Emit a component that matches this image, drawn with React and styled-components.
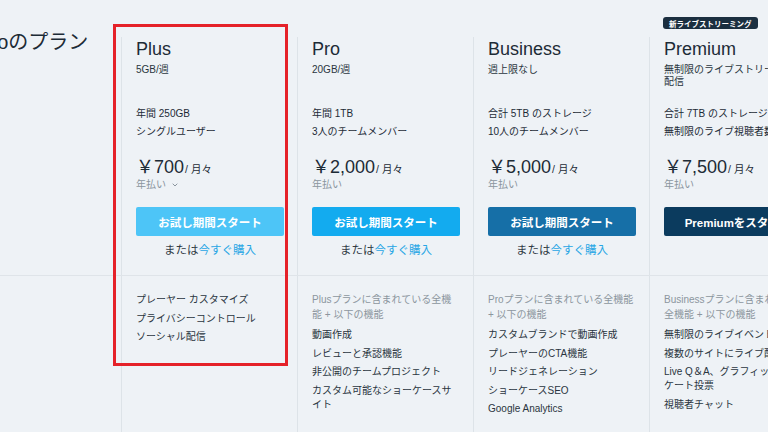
import React from "react";
import styled, { createGlobalStyle } from "styled-components";

const GlobalStyle = createGlobalStyle`
  html, body { margin: 0; padding: 0; background: #eef2f6; overflow: hidden; }
  body {
    font-family: "Liberation Sans", "Noto Sans CJK JP", sans-serif;
    color: #1d2b36;
    width: 768px;
    height: 432px;
  }
  * { box-sizing: border-box; }
`;

const Page = styled.div`
  position: relative;
  width: 768px;
  height: 432px;
  overflow: hidden;
  background: #eef2f6;
`;

const TopRow = styled.div`
  display: flex;
  height: 276px;
  border-bottom: 1px solid #dfe4e9;
`;

const BottomRow = styled.div`
  display: flex;
  height: 156px;
`;

const LeftCell = styled.div`
  width: 121px;
  flex-shrink: 0;
  padding-top: ${(p) => (p.$top ? "30px" : "0")};
`;

const PageTitle = styled.h1`
  margin: 0 0 0 -48px;
  font-size: 20px;
  line-height: 24px;
  font-weight: normal;
  white-space: nowrap;
  color: #1d2b36;
`;

const PlanTop = styled.div`
  width: 176px;
  flex-shrink: 0;
  display: flex;
  flex-direction: column;
`;

const BadgeSlot = styled.div`
  height: 37px;
  display: flex;
  align-items: flex-end;
  padding: 0 0 8px 14px;
`;

const Badge = styled.span`
  display: inline-flex;
  align-items: center;
  height: 12px;
  padding: 0 6px;
  border-radius: 3px;
  background: #1b2f40;
  color: #ffffff;
  font-size: 7.5px;
  font-weight: bold;
  white-space: nowrap;
`;

const PlanBody = styled.div`
  flex: 1;
  border-left: 1px solid #dde3e8;
  padding: 1px 13px 0 14px;
  display: flex;
  flex-direction: column;
`;

const PlanName = styled.h2`
  margin: 0;
  font-size: 18px;
  line-height: 22px;
  font-weight: normal;
  color: #1d2b36;
  white-space: nowrap;
`;

const PlanSub = styled.div`
  margin-top: 4px;
  height: 41px;
  font-size: 10px;
  line-height: 12px;
  color: #2a3640;
`;

const Spec = styled.div`
  font-size: 10px;
  line-height: 18px;
  color: #1d2b36;
  white-space: nowrap;
`;

const PriceRow = styled.div`
  margin-top: 14px;
  display: flex;
  align-items: baseline;
  line-height: 20px;
  white-space: nowrap;
  color: #1d2b36;
`;

const Yen = styled.span`
  font-family: "Noto Sans CJK JP", sans-serif;
  font-size: 18px;
`;

const Amount = styled.span`
  font-size: 18px;
  font-weight: normal;
`;

const Per = styled.span`
  font-size: 10.5px;
  margin-left: 1px;
`;

const Annual = styled.div`
  display: flex;
  align-items: center;
  gap: 6px;
  font-size: 10px;
  line-height: 12px;
  color: #8a959e;
`;

const CtaButton = styled.button`
  margin-top: 16px;
  width: 148px;
  height: 29px;
  flex-shrink: 0;
  border: none;
  border-radius: 2px;
  background: ${(p) => p.$bg};
  color: #ffffff;
  font-family: "Liberation Sans", "Noto Sans CJK JP", sans-serif;
  font-size: 11.5px;
  font-weight: bold;
  white-space: nowrap;
  overflow: hidden;
  padding: 0;
`;

const OrBuy = styled.div`
  margin-top: 6px;
  width: 148px;
  text-align: center;
  font-size: 11.5px;
  line-height: 16px;
  color: #2e3a44;
  white-space: nowrap;
`;

const BuyLink = styled.span`
  color: #27a6e5;
`;

const PlanFeatures = styled.div`
  width: 176px;
  flex-shrink: 0;
  border-left: 1px solid #dde3e8;
  padding: 17px 13px 0 14px;
`;

const Intro = styled.div`
  font-size: 10px;
  line-height: 14.5px;
  color: #8c969e;
  margin-bottom: 6px;
`;

const Feature = styled.div`
  font-size: 10px;
  line-height: 14px;
  color: #2a3540;
  margin-bottom: 4.5px;
`;

const Highlight = styled.div`
  position: absolute;
  left: 113px;
  top: 24px;
  width: 175px;
  height: 342px;
  border: 3px solid #e52129;
  pointer-events: none;
`;

const Chevron = () => (
  <svg width="6" height="4" viewBox="0 0 6 4" fill="none">
    <path d="M0.7 0.7 L3 3 L5.3 0.7" stroke="#8a959e" strokeWidth="1" />
  </svg>
);

const plans = [
  {
    name: "Plus",
    sub: "5GB/週",
    specs: ["年間 250GB", "シングルユーザー"],
    price: "700",
    chevron: true,
    cta: "お試し期間スタート",
    bg: "#4dc5f7",
    buy: true,
    intro: null,
    features: ["プレーヤー カスタマイズ", "プライバシーコントロール", "ソーシャル配信"],
  },
  {
    name: "Pro",
    sub: "20GB/週",
    specs: ["年間 1TB", "3人のチームメンバー"],
    price: "2,000",
    cta: "お試し期間スタート",
    bg: "#13abef",
    buy: true,
    intro: "Plusプランに含まれている全機能 + 以下の機能",
    features: ["動画作成", "レビューと承認機能", "非公開のチームプロジェクト", "カスタム可能なショーケースサイト"],
  },
  {
    name: "Business",
    sub: "週上限なし",
    specs: ["合計 5TB のストレージ", "10人のチームメンバー"],
    price: "5,000",
    cta: "お試し期間スタート",
    bg: "#166fa7",
    buy: true,
    intro: "Proプランに含まれている全機能 + 以下の機能",
    features: ["カスタムブランドで動画作成", "プレーヤーのCTA機能", "リードジェネレーション", "ショーケースSEO", "Google Analytics"],
  },
  {
    name: "Premium",
    badge: "新ライブストリーミング",
    sub: "無制限のライブストリーミング配信",
    specs: ["合計 7TB のストレージ", "無制限のライブ視聴者数"],
    price: "7,500",
    cta: "Premiumをスタート",
    bg: "#0b3b5e",
    buy: false,
    intro: "Businessプランに含まれている全機能 + 以下の機能",
    features: ["無制限のライブイベント", "複数のサイトにライブ配信", "Live Q＆A、グラフィック、アンケート投票", "視聴者チャット"],
  },
];

export default function App() {
  return (
    <>
      <GlobalStyle />
      <Page>
        <TopRow>
          <LeftCell $top>
            <PageTitle>Vimeoのプラン</PageTitle>
          </LeftCell>
          {plans.map((p) => (
            <PlanTop key={p.name}>
              <BadgeSlot>{p.badge && <Badge>{p.badge}</Badge>}</BadgeSlot>
              <PlanBody>
                <PlanName>{p.name}</PlanName>
                <PlanSub>{p.sub}</PlanSub>
                {p.specs.map((s) => (
                  <Spec key={s}>{s}</Spec>
                ))}
                <PriceRow>
                  <Yen>￥</Yen>
                  <Amount>{p.price}</Amount>
                  <Per>/ 月々</Per>
                </PriceRow>
                <Annual>
                  <span>年払い</span>
                  {p.chevron && <Chevron />}
                </Annual>
                <CtaButton $bg={p.bg}>{p.cta}</CtaButton>
                {p.buy && (
                  <OrBuy>
                    または<BuyLink>今すぐ購入</BuyLink>
                  </OrBuy>
                )}
              </PlanBody>
            </PlanTop>
          ))}
        </TopRow>
        <BottomRow>
          <LeftCell />
          {plans.map((p) => (
            <PlanFeatures key={p.name}>
              {p.intro && <Intro>{p.intro}</Intro>}
              {p.features.map((f) => (
                <Feature key={f}>{f}</Feature>
              ))}
            </PlanFeatures>
          ))}
        </BottomRow>
        <Highlight />
      </Page>
    </>
  );
}
